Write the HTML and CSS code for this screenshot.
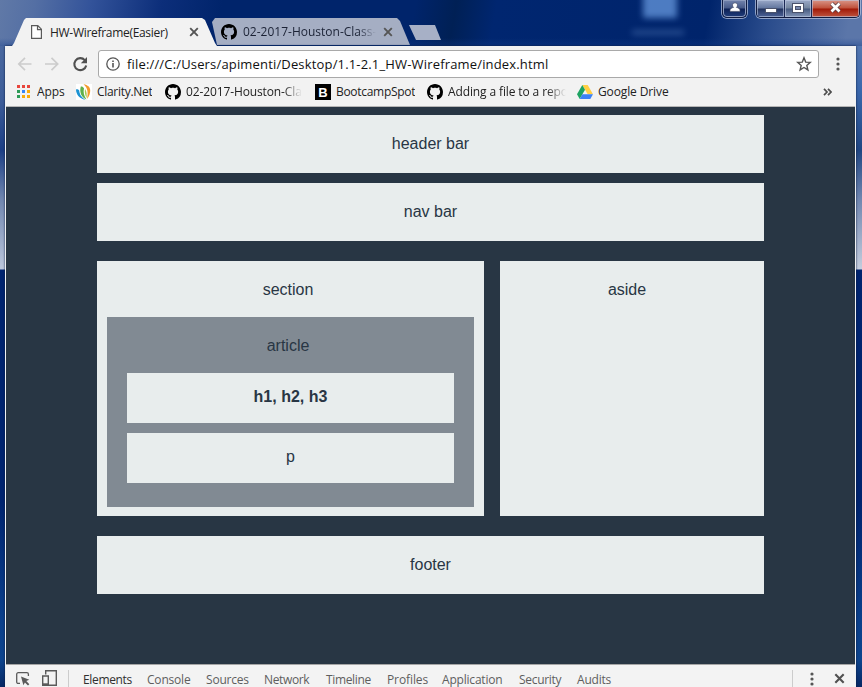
FILE: index.html
```html
<!DOCTYPE html>
<html lang="en">
<head>
<meta charset="utf-8">
<title>HW-Wireframe(Easier)</title>
<link rel="stylesheet" href="styles.css">
</head>
<body>
<svg class="defs" width="0" height="0">
  <symbol id="github" viewBox="0 0 16 16"><path d="M8 0C3.58 0 0 3.58 0 8c0 3.54 2.29 6.53 5.47 7.59.4.07.55-.17.55-.38 0-.19-.01-.82-.01-1.49-2.01.37-2.53-.49-2.69-.94-.09-.23-.48-.94-.82-1.13-.28-.15-.68-.52-.01-.53.63-.01 1.08.58 1.23.82.72 1.21 1.87.87 2.33.66.07-.52.28-.87.51-1.07-1.78-.2-3.64-.89-3.64-3.95 0-.87.31-1.59.82-2.15-.08-.2-.36-1.02.08-2.12 0 0 .67-.21 2.2.82.64-.18 1.32-.27 2-.27.68 0 1.36.09 2 .27 1.53-1.04 2.2-.82 2.2-.82.44 1.1.16 1.92.08 2.12.51.56.82 1.27.82 2.15 0 3.07-1.87 3.75-3.65 3.95.29.25.54.73.54 1.48 0 1.07-.01 1.93-.01 2.2 0 .21.15.46.55.38A8.01 8.01 0 0 0 16 8c0-4.42-3.58-8-8-8z"/></symbol>
  <symbol id="cross" viewBox="0 0 10 10"><path d="M1.2 1.2l7.6 7.6M8.800 1.2L1.2 8.8" fill="none" stroke="currentColor" stroke-width="1.9"/></symbol>
  <symbol id="dots" viewBox="0 0 4 14"><circle cx="2" cy="2" r="1.6"/><circle cx="2" cy="7" r="1.6"/><circle cx="2" cy="12" r="1.6"/></symbol>
</svg>
<div class="window">
  <div class="titlebar">
    <div class="desk-icon"></div>
    <div class="desk-label"></div>
    <div class="tab active">
      <svg class="file" width="11" height="14" viewBox="0 0 11 14"><path d="M.6.6h6.2l3.6 3.6v9.2H.6zM6.5.8v3.8h3.8" fill="#fff" stroke="#5a5a5a" stroke-width="1.2"/></svg>
      <span class="label t1">HW-Wireframe(Easier)</span>
      <svg class="close" width="10" height="10"><use href="#cross"/></svg>
    </div>
    <div class="tab idle">
      <svg class="gh" width="16" height="16"><use href="#github"/></svg>
      <span class="label t2">02-2017-Houston-Class-(</span>
      <svg class="close" width="10" height="10"><use href="#cross"/></svg>
    </div>
    <div class="newtab"></div>
    <div class="controls">
      <div class="user"><svg width="12" height="11" viewBox="0 0 12 11"><path d="M6 .8a2.5 2.5 0 0 1 1.4 4.6c2 .3 3.6 1.2 3.6 3v1H1v-1c0-1.8 1.6-2.7 3.6-3A2.5 2.5 0 0 1 6 .8z" fill="#fff" stroke="#444b66" stroke-width=".7"/></svg></div>
      <div class="trio">
        <div class="min"><svg width="12" height="5"><rect x=".5" y=".5" width="11" height="4" fill="#fff" stroke="#4b536c"/></svg></div>
        <div class="max"><svg width="12" height="10"><rect x=".5" y=".5" width="11" height="9" fill="#fff" stroke="#4b536c"/><rect x="3.5" y="3.5" width="5" height="3" fill="#7787ac" stroke="#4b536c"/></svg></div>
        <div class="quit"><svg width="13" height="11" viewBox="0 0 13 11"><path d="M2.5 1.5l8 8M10.5 1.5l-8 8" stroke="#593f47" stroke-width="4.2"/><path d="M2.5 1.500l8 8M10.5 1.5l-8 8" stroke="#fff" stroke-width="2.7"/></svg></div>
      </div>
    </div>
  </div>
  <div class="client">
    <div class="toolbar">
      <svg class="nav-icons" width="74" height="16" viewBox="0 0 74 16" fill="none">
        <path d="M15.500 8H3M9 1.800L2.800 8 9 14.200M29 8h12.500M35.500 1.800L41.700 8l-6.200 6.200" stroke="#ccc" stroke-width="1.700"/>
        <path d="M68.800 4.100A6 6 0 1 0 70.200 9.500" stroke="#505050" stroke-width="2.100"/><path d="M71 1v6.200h-6.200z" fill="#505050"/>
      </svg>
      <div class="omnibox">
        <svg width="14" height="14" viewBox="0 0 14 14"><circle cx="7" cy="7" r="6.200" fill="none" stroke="#555" stroke-width="1.300"/><path d="M6.200 6h1.600v4.500H6.200zM6.200 3.400h1.600V5H6.200z" fill="#555"/></svg>
        <span class="url">file:///C:/Users/apimenti/Desktop/1.1-2.1_HW-Wireframe/index.html</span>
        <svg class="star" width="16" height="16" viewBox="0 0 16 16"><path d="M8 1.800l1.700 4.300 4.600.3-3.500 3 1.100 4.500L8 11.500l-3.900 2.400 1.100-4.500-3.500-3 4.600-.3z" fill="none" stroke="#555" stroke-width="1.400"/></svg>
      </div>
      <svg class="dots" width="4" height="14"><use href="#dots"/></svg>
    </div>
    <div class="bookmarks">
      <div class="bm b1"><svg width="13" height="13" viewBox="0 0 13 13"><path d="M0 0h3v3H0zM5 0h3v3H5zM10 0h3v3h-3z" fill="#e8453c"/><path d="M0 5h3v3H0zM0 10h3v3H0z" fill="#2d9b57"/><path d="M5 5h3v3H5z" fill="#3686f7"/><path d="M10 5h3v3h-3zM5 10h3v3H5zM10 10h3v3h-3z" fill="#f9ab0b"/></svg><span>Apps</span></div>
      <div class="bm b2"><svg width="16" height="16" viewBox="0 0 16 16"><path fill="#fff" d="M0 0h16v16H0z"/><path d="M0 5.500C0 10 3 14.500 9.500 16 5 13 3.500 10 3.200 6.500 2.500 5.500 1 5 0 5.500z" fill="#1c93d3"/><path d="M4.800 2.500C3.300 8 5 13 10.500 15.500 8 12 7 8 8 4.200 7 2.800 6 2.200 4.800 2.500z" fill="#5fb04a"/><path d="M7.500.2C12 1 14 3 14.200 6c.2 3-1 6.500-3.200 9C12.300 9 12 4 7.500.2z" fill="#f39a2b"/><path d="M9 5c1.800 2.500 2 6 1.500 9C9 11 8.500 8 9 5z" fill="#a6c84c"/></svg><span>Clarity.Net</span></div>
      <div class="bm b3"><svg width="16" height="16"><use href="#github"/></svg><span class="fade">02-2017-Houston-Clas</span></div>
      <div class="bm b4"><div class="boot">B</div><span>BootcampSpot</span></div>
      <div class="bm b5"><svg width="16" height="16"><use href="#github"/></svg><span class="fade">Adding a file to a repo</span></div>
      <div class="bm b6"><svg width="16" height="14" viewBox="0 0 16 14"><path d="M5.300 0h5.400L16 9.300h-5.300z" fill="#ffcf43"/><path d="M5.300 0L8 4.700 2.700 14 0 9.300z" fill="#1da362"/><path d="M5.400 9.300H16L13.300 14H2.700z" fill="#3b81f5"/></svg><span>Google Drive</span></div>
      <svg class="more" width="9" height="8" viewBox="0 0 9 8" fill="none" stroke="#4d4d4d" stroke-width="1.700"><path d="M1 .8L4 4 1 7.200M5 .8L8 4 5 7.200"/></svg>
    </div>
    <main class="page">
      <header class="box">header bar</header>
      <nav class="box">nav bar</nav>
      <div class="row">
        <section>
          <div class="caption">section</div>
          <article>
            <div class="caption">article</div>
            <h1>h1, h2, h3</h1>
            <p>p</p>
          </article>
        </section>
        <aside>aside</aside>
      </div>
      <footer class="box">footer</footer>
    </main>
    <div class="devtools">
      <svg class="inspect" width="14" height="14" viewBox="0 0 14 14"><path d="M4 11.400H2.200A1.500 1.500 0 0 1 .7 9.900V2.200A1.500 1.500 0 0 1 2.200.7h8.700a1.500 1.500 0 0 1 1.500 1.500V4" fill="none" stroke="#5a5a5a" stroke-width="1.300"/><path d="M5 4.500l8.300 3.200-3 1.400 3 3.200-1.300 1.300-3.100-3.100-1.500 2.700z" fill="#5a5a5a"/></svg>
      <svg class="device" width="15" height="16" viewBox="0 0 15 16" fill="none" stroke="#5a5a5a" stroke-width="1.400"><path d="M3.700 4.500V.7h10.600v14.600H7M.7 6h5.600v9.300H.7z"/><path d="M.7 14.300h5.600" stroke-width="2"/></svg>
      <i class="rule"></i>
      <span class="dt on d1">Elements</span><span class="dt d2">Console</span><span class="dt d3">Sources</span><span class="dt d4">Network</span><span class="dt d5">Timeline</span><span class="dt d6">Profiles</span><span class="dt d7">Application</span><span class="dt d8">Security</span><span class="dt d9">Audits</span>
      <i class="rule end"></i>
      <svg class="dots" width="4" height="14"><use href="#dots"/></svg>
      <svg class="close" width="11" height="11"><use href="#cross"/></svg>
    </div>
  </div>
</div>
</body>
</html>
```
FILE: styles.css
```css
* { box-sizing: border-box; }
body { margin: 0; overflow: hidden; font: 12px/16px "Open Sans", "Noto Sans", sans-serif; color: #222; }
svg { display: block; flex: none; }
.defs { position: absolute; }
.window {
  width: 862px; height: 687px; display: flex; flex-direction: column;
  background:
    linear-gradient(#5572a5 0, #3d5d99 100px, #1c3f85 150px, #7187b0 200px, #bcc7dc 269px, transparent 270px) left / 5px 100% no-repeat,
    linear-gradient(#6e87b4 0, #3a67ac 90px, #204682 150px, #7187b0 200px, #c4cddd 269px, transparent 270px) right / 6px 100% no-repeat,
    linear-gradient(#00246f 0 500px, #0b408b 620px, #0d448d 660px, #062763 687px);
}
.titlebar {
  position: relative; height: 46px; flex: none; display: flex; align-items: flex-start; padding: 18px 0 0 12px;
  background:
    linear-gradient(transparent 38px, rgba(20,62,140,.4)),
    linear-gradient(100deg, #6079a7 0, #546fa4 35px, #33539a 90px, #0c2e7a 160px, #00246b 220px, #00246b 410px, #002055 450px, #002670 490px, #00246b 700px, #2a4c8c 760px, #5b76a9 840px);
}
.desk-icon { position: absolute; left: 643px; top: -8px; width: 34px; height: 26px; background: #5b8cd2; filter: blur(3px); opacity: .85; }
.desk-label { position: absolute; left: 632px; top: 30px; width: 52px; height: 5px; background: #4168a8; filter: blur(3px); opacity: .6; }
.tab { height: 28px; display: flex; align-items: center; position: relative; }
.active { z-index: 1; width: 205px; padding-left: 19px; background: #f2f2f2; clip-path: polygon(0 28px, 2px 25px, 12px 2px, 14px 0, 190px 0, 193px 2px, 203px 25px, 205px 28px); }
.idle { width: 198px; height: 27px; margin-left: -5px; padding-left: 9px; background: #a5aec3; color: #1b2235; clip-path: polygon(0 4px, 3px 0, 185px 0, 188px 3px, 198px 27px, 5px 27px); }
.label { white-space: nowrap; overflow: hidden; padding-top: 1px; }
.t1 { width: 132px; margin-left: 8px; letter-spacing: -.3px; }
.t2 { width: 133px; margin-left: 6px; -webkit-mask-image: linear-gradient(90deg, #000 115px, transparent 133px); mask-image: linear-gradient(90deg, #000 115px, transparent 133px); }
.tab .close { color: #555; margin-left: 7px; }
.newtab { width: 32px; height: 15px; margin: 7px 0 0 -1px; background: #a7b0c6; clip-path: polygon(0 0, 26px 0, 32px 15px, 7px 15px); }
.controls { position: absolute; right: 2px; top: 0; display: flex; gap: 9px; }
.user, .trio { height: 18px; border: 1px solid #101b40; border-top: 0; border-radius: 0 0 5px 5px; box-shadow: inset 0 0 0 1px #8d9bbd, 0 0 0 1px rgba(180,192,220,.75); overflow: hidden; display: flex; }
.user { width: 25px; padding: 2px 0 0 6px; background: linear-gradient(#7384ad, #465988 8px, #0d2055 9px, #213e7c); }
.trio { width: 104px; }
.trio > div { display: flex; justify-content: center; border-right: 1px solid #1b2854; box-shadow: inset 0 0 0 1px rgba(190,203,226,.6); background: linear-gradient(#9ba9c8, #63779f 8px, #23345f 9px, #4d6398); }
.trio .min { width: 28px; padding-top: 8px; }
.trio .max { width: 27px; padding-top: 3px; background: linear-gradient(#9ba9c8, #74869f 8px, #465a80 9px, #8496b8); }
.trio .quit { width: 47px; padding-top: 2px; border: 0; background: linear-gradient(#d99689, #c0513b 8px, #a11a08 9px, #bf543f); }
.client { flex: 1; margin: 0 6px 0 5px; border: solid #f0f2f3; border-width: 0 1px; display: flex; flex-direction: column; box-shadow: 0 0 2px #0b1a3c; background: #f2f2f2; position: relative; }
.toolbar { height: 36px; display: flex; align-items: center; padding-left: 10px; }
.nav-icons { margin-right: 8px; }
.omnibox { width: 721px; height: 28px; border: 1px solid #a9a9a9; border-radius: 3px; background: #fff; display: flex; align-items: center; padding: 0 6px 0 7px; }
.url { font-size: 13px; margin-left: 7px; letter-spacing: .165px; white-space: nowrap; color: #111; }
.star { margin-left: auto; }
.dots { fill: #555; }
.toolbar .dots { margin-left: 17px; }
.bookmarks { height: 25px; padding: 0 0 5px 11px; flex: none; display: flex; align-items: center; border-bottom: 1px solid #b5b5b5; }
.bm { display: flex; align-items: center; white-space: nowrap; flex: none; height: 16px; }
.bm span { overflow: hidden; letter-spacing: -.12px; padding-top: 1px; }
.b1 { width: 59px; gap: 7px; }
.b2 { width: 89px; gap: 5px; }
.bm.b2 span, .bm.b4 span { letter-spacing: -.3px; }
.b3 { width: 150px; gap: 5px; }
.b3 .fade { width: 116px; }
.b4 { width: 112px; gap: 5px; }
.b5 { width: 150px; gap: 5px; }
.b5 .fade { width: 118px; }
.b6 { gap: 5px; }
.fade { -webkit-mask-image: linear-gradient(90deg, #000 84%, transparent); mask-image: linear-gradient(90deg, #000 84%, transparent); }
.boot { width: 16px; height: 16px; background: #000; color: #fff; font: bold 13px/17px "Liberation Sans", sans-serif; text-align: center; }
.more { margin: 0 23px 0 auto; }
.page { height: 557px; flex: none; padding: 8px 91px 0; background: #283644; color: #283644; font: 16px/18px "Liberation Sans", Arial, sans-serif; text-align: center; }
.box { height: 58px; padding: 20px 0; background: #e8eded; margin-bottom: 10px; }
.row { display: flex; gap: 16px; height: 255px; margin: 20px 0; }
section { width: 387px; background: #e8eded; padding: 20px 10px 0; }
.caption { height: 36px; padding-right: 5px; }
article { height: 190px; background: #818a93; padding: 20px 20px 0; }
h1, article p { font-size: 16px; line-height: 18px; margin: 0 0 10px; height: 50px; padding-top: 15px; background: #e8eded; }
aside { width: 264px; background: #e8eded; padding: 20px 10px 0 0; }
.devtools { flex: 1; min-height: 0; height: 24px; border-top: 1px solid #a5a5a5; background: #f3f3f3; display: flex; padding: 5px 0 0 10px; color: #5e5e5e; overflow: hidden; }
.inspect { margin-top: 2px; }
.device { margin: 0 11px 0 12px; }
.rule { width: 1px; height: 17px; background: #ccc; margin-right: 14px; flex: none; }
.dt { line-height: 19px; white-space: nowrap; flex: none; letter-spacing: -.1px; }
.on { color: #2f2f2f; }
.d1 { width: 64px; letter-spacing: -.35px; } .d2 { width: 59px; letter-spacing: -.2px; } .d3 { width: 58px; letter-spacing: -.2px; } .d4 { width: 62px; letter-spacing: -.35px; } .d5 { width: 61px; letter-spacing: -.35px; }
.d6 { width: 55px; } .d7 { width: 77px; letter-spacing: -.2px; } .d8 { width: 58px; letter-spacing: -.3px; } .d9 { width: 40px; letter-spacing: -.2px; }
.rule.end { margin: 0 17px 0 auto; }
.devtools .dots { margin: 2px 20px 0 0; }
.devtools .close { margin: 3px 10px 0 0; color: #505050; }
```
